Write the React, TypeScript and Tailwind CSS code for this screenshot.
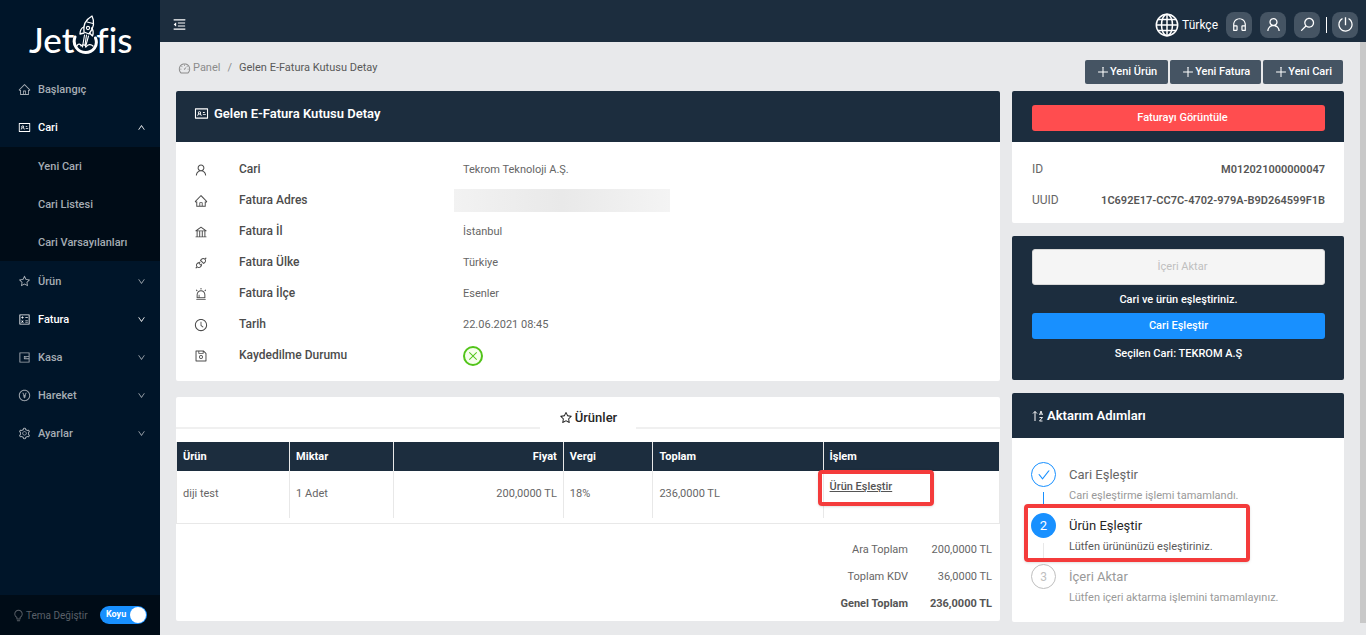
import type { ReactNode } from "react";
import {
  AiOutlineAlert,
  AiOutlineApi,
  AiOutlineBank,
  AiOutlineBulb,
  AiOutlineCalculator,
  AiOutlineCheck,
  AiOutlineClockCircle,
  AiOutlineClose,
  AiOutlineCustomerService,
  AiOutlineDashboard,
  AiOutlineDown,
  AiOutlineHome,
  AiOutlineIdcard,
  AiOutlineMenuFold,
  AiOutlinePayCircle,
  AiOutlinePlus,
  AiOutlinePoweroff,
  AiOutlineSave,
  AiOutlineSearch,
  AiOutlineSetting,
  AiOutlineStar,
  AiOutlineUp,
  AiOutlineUser,
  AiOutlineWallet,
} from "react-icons/ai";

function RocketIcon() {
  return (
    <svg viewBox="0 0 28 40" fill="none" stroke="currentColor" strokeLinecap="round" strokeLinejoin="round" className="w-7 h-10">
      <path d="M4 22c-3 8 3 15.500 10.500 15.500s13-7 10-14.500" strokeWidth="3" />
      <path d="M13 17c-1-6 1-12 8-16 3 6 1 13-3 18z" strokeWidth="1.3" />
      <path d="M16 7l6 1.500" strokeWidth="1.2" />
      <circle cx="17" cy="13" r="1.600" strokeWidth="1.1" />
      <path d="M13 12c-3 1-4 4-4 7l4-1M20.500 13c2 2 2 5 1 8l-3-3" strokeWidth="1.3" />
      <path d="M13.500 20l-2 12M17.500 21l-3 11M15.500 20l-1.500 10" strokeWidth="1.1" />
      <path d="M6 31c1-3 4-2 4 0 2-2 5-1 5 1 2-3 5-3 7-1" strokeWidth="1.2" />
    </svg>
  );
}

function GlobeIcon() {
  return (
    <svg viewBox="0 0 24 24" fill="none" stroke="currentColor" strokeWidth="1.5" className="w-6 h-6">
      <circle cx="12" cy="12" r="10.700" />
      <ellipse cx="12" cy="12" rx="5.500" ry="10.700" />
      <path d="M12 1.300v21.400M1.300 12h21.400M3 6.500h18M3 17.500h18" />
    </svg>
  );
}

function SortIcon() {
  return (
    <svg viewBox="0 0 12 12" fill="none" stroke="currentColor" className="w-3 h-3">
      <path d="M3 11V1.500M1 3.500l2-2 2 2" />
      <path d="M7.500 5l1.500-4 1.500 4M8 4h2M7.500 7.500h3l-3 3.500h3" strokeWidth="0.9" />
    </svg>
  );
}

const topMenu = [
  { label: "Başlangıç", icon: <AiOutlineHome />, active: false, arrow: null },
  { label: "Cari", icon: <AiOutlineIdcard />, active: true, arrow: <AiOutlineUp /> },
];

const subMenu = ["Yeni Cari", "Cari Listesi", "Cari Varsayılanları"];

const bottomMenu = [
  { label: "Ürün", icon: <AiOutlineStar />, active: false, arrow: <AiOutlineDown /> },
  { label: "Fatura", icon: <AiOutlineCalculator />, active: true, arrow: <AiOutlineDown /> },
  { label: "Kasa", icon: <AiOutlineWallet />, active: false, arrow: <AiOutlineDown /> },
  { label: "Hareket", icon: <AiOutlinePayCircle />, active: false, arrow: <AiOutlineDown /> },
  { label: "Ayarlar", icon: <AiOutlineSetting />, active: false, arrow: <AiOutlineDown /> },
];

const headerActions = [
  { label: "Destek", icon: <AiOutlineCustomerService /> },
  { label: "Profil", icon: <AiOutlineUser /> },
  { label: "Ara", icon: <AiOutlineSearch className="-scale-x-100" /> },
];

const details = [
  { label: "Cari", icon: <AiOutlineUser />, value: "Tekrom Teknoloji A.Ş." },
  { label: "Fatura Adres", icon: <AiOutlineHome />, value: null },
  { label: "Fatura İl", icon: <AiOutlineBank />, value: "İstanbul" },
  { label: "Fatura Ülke", icon: <AiOutlineApi />, value: "Türkiye" },
  { label: "Fatura İlçe", icon: <AiOutlineAlert />, value: "Esenler" },
  { label: "Tarih", icon: <AiOutlineClockCircle />, value: "22.06.2021 08:45" },
];

const totals = [
  { label: "Ara Toplam", value: "200,0000 TL", bold: false },
  { label: "Toplam KDV", value: "36,0000 TL", bold: false },
  { label: "Genel Toplam", value: "236,0000 TL", bold: true },
];

type MenuItemProps = { label: string; icon: ReactNode; active: boolean; arrow: ReactNode };

function MenuItem({ label, icon, active, arrow }: MenuItemProps) {
  return (
    <li>
      <a
        href="#"
        className={`flex items-center h-[38px] pl-[18px] pr-[14px] text-[11px] font-medium ${active ? "text-white" : "text-[#a6adb4]"}`}
      >
        <span className="w-5 text-[13px] leading-none">{icon}</span>
        <span className="flex-1 pt-[2px]">{label}</span>
        <span className="text-[9px] leading-none">{arrow}</span>
      </a>
    </li>
  );
}

function Sidebar() {
  return (
    <aside className="flex flex-col w-40 shrink-0 bg-[#001529]">
      <a href="#" aria-label="Jetofis" className="flex items-end h-[70px] pl-[29px] pb-[10px] text-white font-[Lato] font-medium">
        <span className="text-[35px] leading-[42px]">Jet</span>
        <span className="-mx-[3px] pb-[5px]">
          <RocketIcon />
        </span>
        <span className="text-[35px] leading-[42px] [font-variant-ligatures:none]">fis</span>
      </a>
      <nav className="flex-1">
        <ul>
          {topMenu.map((item) => (
            <MenuItem key={item.label} {...item} />
          ))}
          <li className="my-px bg-[#000c17]">
            <ul>
              {subMenu.map((label) => (
                <li key={label}>
                  <a href="#" className="flex items-center h-[38px] pl-[38px] pt-[2px] text-[11px] font-medium text-[#a6adb4]">
                    {label}
                  </a>
                </li>
              ))}
            </ul>
          </li>
          {bottomMenu.map((item) => (
            <MenuItem key={item.label} {...item} />
          ))}
        </ul>
      </nav>
      <div className="flex items-center justify-between h-10 pl-3 pr-[13px] bg-[#000c17] text-[#5a6068]">
        <span className="flex items-center gap-px text-[10px]">
          <AiOutlineBulb className="text-[13px]" />
          Tema Değiştir
        </span>
        <button
          type="button"
          role="switch"
          aria-checked="true"
          className="flex items-center justify-between w-[47px] h-[18px] pl-[6px] pr-px rounded-full bg-[#1890ff] text-white text-[9px] font-bold"
        >
          Koyu
          <span className="w-4 h-4 rounded-full bg-white" />
        </button>
      </div>
    </aside>
  );
}

function Header() {
  return (
    <header className="flex items-center justify-between h-[42px] pl-3 pr-2 pt-[7px] bg-[#1c2d3e] text-white">
      <button type="button" aria-label="Menü" className="text-[15px]">
        <AiOutlineMenuFold />
      </button>
      <div className="flex items-center gap-[6px]">
        <div className="flex items-center gap-2">
          <button type="button" className="flex items-center gap-[3px] text-[12px]">
            <GlobeIcon />
            Türkçe
          </button>
          {headerActions.map((action) => (
            <button
              key={action.label}
              type="button"
              aria-label={action.label}
              className="flex items-center justify-center w-[26px] h-[26px] rounded-lg bg-[#455463] text-[17px]"
            >
              {action.icon}
            </button>
          ))}
        </div>
        <div className="flex items-center gap-[5px]">
          <span className="w-px h-4 bg-white" />
          <button type="button" aria-label="Çıkış" className="flex items-center justify-center w-[26px] h-[26px] rounded-lg bg-[#455463] text-[17px]">
            <AiOutlinePoweroff />
          </button>
        </div>
      </div>
    </header>
  );
}

function DetailCard() {
  return (
    <section className="rounded-xs overflow-hidden bg-white">
      <h1 className="flex items-center gap-[5px] h-[51px] px-[18px] pb-[6px] bg-[#1c2d3e] text-white text-[13px] font-semibold">
        <AiOutlineIdcard className="text-[15px]" />
        Gelen E-Fatura Kutusu Detay
      </h1>
      <dl className="pt-3 pb-[10px] pl-[18px]">
        {details.map((row) => (
          <div key={row.label} className="flex items-center h-[31px]">
            <dt className="flex items-center w-[269px] text-[12px] leading-[31px] font-medium text-[#4c4c4c]">
              <span className="w-[45px] text-[14px]">{row.icon}</span>
              {row.label}
            </dt>
            {row.value ? (
              <dd className="text-[11px] leading-[31px] text-[#666]">{row.value}</dd>
            ) : (
              <dd className="-ml-[9px] w-[216px] h-[23px] bg-linear-to-r from-[#f2f2f2] via-[#e9e9e9] to-[#f4f4f4]" />
            )}
          </div>
        ))}
        <div className="flex items-center h-[31px]">
          <dt className="flex items-center w-[269px] text-[12px] leading-[31px] font-medium text-[#4c4c4c]">
            <span className="w-[45px] text-[14px]">
              <AiOutlineSave />
            </span>
            Kaydedilme Durumu
          </dt>
          <dd className="flex items-center justify-center w-5 h-5 rounded-full border-2 border-[#52c41a] bg-[#f6ffed] text-[#52c41a] text-[12px]">
            <AiOutlineClose />
          </dd>
        </div>
      </dl>
    </section>
  );
}

function ProductsCard() {
  return (
    <section className="rounded-xs bg-white">
      <div className="flex items-end h-8">
        <span className="flex-1 h-[2px] bg-[#f0f0f0]" />
        <h2 className="flex items-center justify-center gap-[2px] w-[96px] h-[22px] text-[13px] font-medium text-[#262626]">
          <AiOutlineStar className="text-[14px]" />
          Ürünler
        </h2>
        <span className="flex-1 h-[2px] bg-[#f0f0f0]" />
      </div>
      <div className="mt-[13px] pb-[5px] border-x border-b border-[#e8e8e8]">
        <table className="w-full table-fixed text-left text-[11px] text-[#666]">
          <colgroup>
            <col className="w-[13.7%]" />
            <col className="w-[12.6%]" />
            <col className="w-[20.7%]" />
            <col className="w-[10.9%]" />
            <col className="w-[20.7%]" />
            <col />
          </colgroup>
          <thead>
            <tr className="h-[29px] bg-[#1c2d3e] text-white">
              <th className="px-[6px] pt-[2px] font-bold border-r border-[#e8e8e8]">Ürün</th>
              <th className="px-[6px] pt-[2px] font-bold border-r border-[#e8e8e8]">Miktar</th>
              <th className="px-[6px] pt-[2px] font-bold border-r border-[#e8e8e8] text-right">Fiyat</th>
              <th className="px-[6px] pt-[2px] font-bold border-r border-[#e8e8e8]">Vergi</th>
              <th className="px-[6px] pt-[2px] font-bold border-r border-[#e8e8e8]">Toplam</th>
              <th className="px-[6px] pt-[2px] font-bold">İşlem</th>
            </tr>
          </thead>
          <tbody>
            <tr className="h-[47px]">
              <td className="px-[6px] border-r border-[#e8e8e8]">diji test</td>
              <td className="px-[6px] border-r border-[#e8e8e8]">1 Adet</td>
              <td className="px-[6px] border-r border-[#e8e8e8] text-right">200,0000 TL</td>
              <td className="px-[6px] border-r border-[#e8e8e8]">18%</td>
              <td className="px-[6px] border-r border-[#e8e8e8]">236,0000 TL</td>
              <td className="relative px-[6px] pt-2 align-top">
                <a href="#" className="font-medium text-[#555] underline">
                  Ürün Eşleştir
                </a>
                <span className="absolute -left-[6px] -top-px w-[116px] h-9 rounded border-4 border-[#f43b3b] shadow-sm pointer-events-none" />
              </td>
            </tr>
          </tbody>
        </table>
      </div>
      <dl className="pt-[12px] pb-1 pr-2 text-[11px] text-[#666] text-right">
        {totals.map((row) => (
          <div key={row.label} className={`flex items-center justify-end h-[27px] leading-[27px] ${row.bold ? "font-bold text-[#555]" : ""}`}>
            <dt>{row.label}</dt>
            <dd className="w-[84px]">{row.value}</dd>
          </div>
        ))}
      </dl>
    </section>
  );
}

function SideColumn() {
  return (
    <div className="flex flex-col gap-[13px]">
      <section className="rounded-xs overflow-hidden bg-white">
        <div className="h-[51px] pl-5 pr-[19px] pt-[13px] bg-[#1c2d3e]">
          <button type="button" className="w-full h-[26px] pl-2 rounded-[3px] bg-[#ff4d4f] text-white text-[11px] font-medium">
            Faturayı Görüntüle
          </button>
        </div>
        <dl className="pl-5 pr-[19px] pt-3 pb-[7px]">
          <div className="flex items-center justify-between h-[31px] leading-[31px]">
            <dt className="text-[12px] text-[#666]">ID</dt>
            <dd className="text-[11px] font-semibold text-[#555]">M012021000000047</dd>
          </div>
          <div className="flex items-center justify-between h-[31px] leading-[31px]">
            <dt className="text-[12px] text-[#666]">UUID</dt>
            <dd className="text-[11px] font-semibold text-[#555]">1C692E17-CC7C-4702-979A-B9D264599F1B</dd>
          </div>
        </dl>
      </section>

      <section className="flex flex-col pl-5 pr-[19px] pt-[13px] pb-[11px] rounded-xs bg-[#1c2d3e] text-white text-[11px] font-medium text-center">
        <button type="button" disabled className="h-9 pl-2 rounded-[3px] border border-[#d9d9d9] bg-[#f5f5f5] text-[#bfbfbf] font-normal">
          İçeri Aktar
        </button>
        <p className="h-7 leading-[30px]">Cari ve ürün eşleştiriniz.</p>
        <button type="button" className="h-[26px] rounded-[3px] bg-[#1890ff]">
          Cari Eşleştir
        </button>
        <p className="leading-[30px]">Seçilen Cari: TEKROM A.Ş</p>
      </section>

      <section className="rounded-xs bg-white">
        <h2 className="flex items-center gap-[3px] h-[45px] px-5 rounded-t-xs bg-[#1c2d3e] text-white text-[13px] font-semibold">
          <SortIcon />
          Aktarım Adımları
        </h2>
        <ol className="px-[19px] pt-6 pb-[7px]">
          <li className="flex gap-[13px] h-[51px]">
            <div className="flex flex-col items-center">
              <span className="flex items-center justify-center w-[25px] h-[25px] rounded-full border border-[#1890ff] text-[#1890ff] text-[14px]">
                <AiOutlineCheck />
              </span>
              <span className="mt-[5px] w-px h-3 bg-[#1890ff]" />
            </div>
            <div>
              <h3 className="text-[13px] leading-[25px] text-[#666]">Cari Eşleştir</h3>
              <p className="text-[11px] leading-[18px] text-[#999]">Cari eşleştirme işlemi tamamlandı.</p>
            </div>
          </li>
          <li className="relative flex gap-[13px] h-[51px]">
            <div className="flex flex-col items-center">
              <span className="flex items-center justify-center w-[25px] h-[25px] rounded-full bg-[#1890ff] text-white text-[13px]">2</span>
              <span className="mt-[5px] w-px h-4 bg-[#e8e8e8]" />
            </div>
            <div>
              <h3 className="text-[13px] leading-[25px] text-[#262626]">Ürün Eşleştir</h3>
              <p className="text-[11px] leading-[18px] text-[#595959]">Lütfen ürününüzü eşleştiriniz.</p>
            </div>
            <span className="absolute -left-[7px] -top-[9px] w-[226px] h-[58px] rounded border-4 border-[#f43b3b] shadow-sm pointer-events-none" />
          </li>
          <li className="flex gap-[13px] h-[51px]">
            <span className="flex items-center justify-center w-[25px] h-[25px] rounded-full border border-[#bfbfbf] text-[#bfbfbf] text-[12px]">3</span>
            <div>
              <h3 className="text-[13px] leading-[25px] text-[#999]">İçeri Aktar</h3>
              <p className="text-[11px] leading-[18px] text-[#999]">Lütfen içeri aktarma işlemini tamamlayınız.</p>
            </div>
          </li>
        </ol>
      </section>
    </div>
  );
}

export default function App() {
  return (
    <div className="flex min-h-screen bg-[#e8e9eb] font-[Roboto,sans-serif]">
      <Sidebar />
      <div className="flex-1 flex flex-col min-w-0">
        <Header />
        <div className="flex-1 flex">
          <main className="flex-1 min-w-0 px-4 pb-3">
            <div className="flex items-center justify-between h-[49px]">
              <nav aria-label="Breadcrumb" className="flex items-center gap-[7px] pl-[2px] pt-[3px] text-[11px] text-[#595959]">
                <a href="#" className="flex items-center gap-[2px] text-[#8c8c8c]">
                  <AiOutlineDashboard className="text-[13px]" />
                  Panel
                </a>
                <span className="text-[#8c8c8c]">/</span>
                <span>Gelen E-Fatura Kutusu Detay</span>
              </nav>
              <div className="flex gap-[2px] pt-[11px] pr-px">
                {["Yeni Ürün", "Yeni Fatura", "Yeni Cari"].map((label) => (
                  <button
                    key={label}
                    type="button"
                    className="flex items-center h-6 px-[11px] rounded-xs bg-[#455463] text-white text-[11px] font-medium"
                  >
                    <AiOutlinePlus className="text-[14px]" />
                    {label}
                  </button>
                ))}
              </div>
            </div>
            <div className="grid grid-cols-[minmax(0,1fr)_332px] items-start gap-3">
              <div className="flex flex-col gap-4">
                <DetailCard />
                <ProductsCard />
              </div>
              <SideColumn />
            </div>
          </main>
          <div aria-hidden="true" className="w-[6px] pb-3">
            <div className="h-full bg-[#c8c8c8]" />
          </div>
        </div>
      </div>
    </div>
  );
}
